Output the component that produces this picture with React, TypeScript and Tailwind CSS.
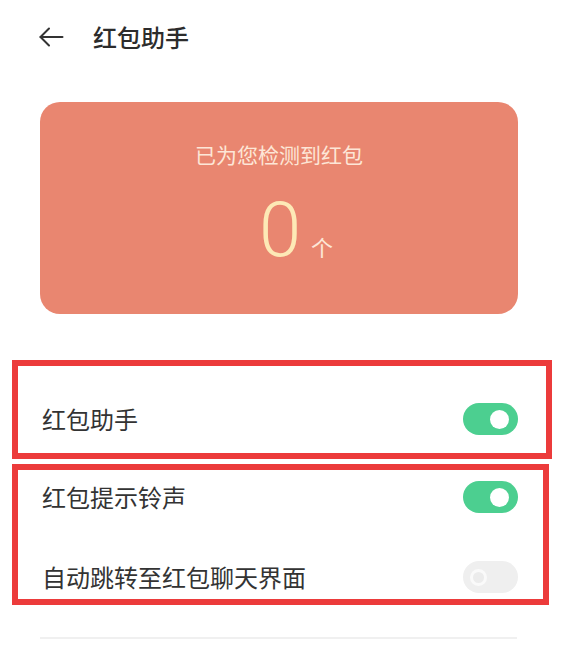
import React from "react";

function Toggle({ on }: { on: boolean }) {
  if (on) {
    return (
      <div className="flex h-[32px] w-[55px] shrink-0 items-center justify-end rounded-full bg-[#4ccf90] pr-[9px]">
        <div className="h-[19px] w-[19px] rounded-full bg-white" />
      </div>
    );
  }
  return (
    <div className="flex h-[32px] w-[55px] shrink-0 items-center justify-start rounded-full bg-[#efefef] pl-[7px]">
      <div className="h-[17px] w-[17px] rounded-full border-[3px] border-[#fafafa] bg-[#ececec]" />
    </div>
  );
}

export default function App() {
  const font = { fontFamily: '"Noto Sans CJK SC", "Noto Sans", sans-serif' };
  return (
    <div className="min-h-[645px] w-[568px] bg-white" style={font}>
      {/* header */}
      <div className="flex h-[74px] items-center pl-[39px]">
        <svg width="25" height="20" viewBox="0 0 25 20" fill="none" stroke="#333" strokeWidth="2" strokeLinecap="round" strokeLinejoin="round">
          <path d="M1.5 10H23.5" />
          <path d="M10 1.5L1.5 10L10 18.5" />
        </svg>
        <div className="ml-[29px] text-[24px] leading-[24px] font-medium text-[#2c2c2c]">红包助手</div>
      </div>

      {/* card */}
      <div className="ml-[40px] mr-[50px] mt-[28px] flex h-[212px] flex-col items-center rounded-[20px] bg-[#e98670]">
        <div className="mt-[42px] text-[21px] leading-[21px] text-[#fde6d7]">已为您检测到红包</div>
        <div className="mt-[27px] flex items-baseline pl-[34px]" style={{ fontFamily: 'Roboto, "Noto Sans", sans-serif' }}>
          <span className="text-[76px] leading-[76px] font-light text-[#fde9b6]">0</span>
          <span className="ml-[10px] text-[22px] leading-[22px] text-[#fde6d7]" style={font}>个</span>
        </div>
      </div>

      {/* box 1 */}
      <div className="mt-[46px] ml-[12px] mr-[16px] h-[99px] border-[6px] border-[#ec3b3b]">
        <div className="flex items-center justify-between pt-[37px] pl-[24px] pr-[28px]">
          <div className="text-[24px] leading-[32px] text-[#333]">红包助手</div>
          <Toggle on />
        </div>
      </div>

      {/* box 2 */}
      <div className="mt-[5px] ml-[12px] mr-[19px] h-[141px] border-[6px] border-[#ec3b3b] pt-[11px] pl-[24px] pr-[25px]">
        <div className="flex items-center justify-between">
          <div className="text-[24px] leading-[32px] text-[#333]">红包提示铃声</div>
          <Toggle on />
        </div>
        <div className="mt-[48px] flex items-center justify-between">
          <div className="text-[24px] leading-[32px] text-[#333]">自动跳转至红包聊天界面</div>
          <Toggle on={false} />
        </div>
      </div>

      {/* divider */}
      <div className="ml-[40px] mr-[51px] mt-[32px] h-[2px] bg-[#f0f0f0]" />
    </div>
  );
}
